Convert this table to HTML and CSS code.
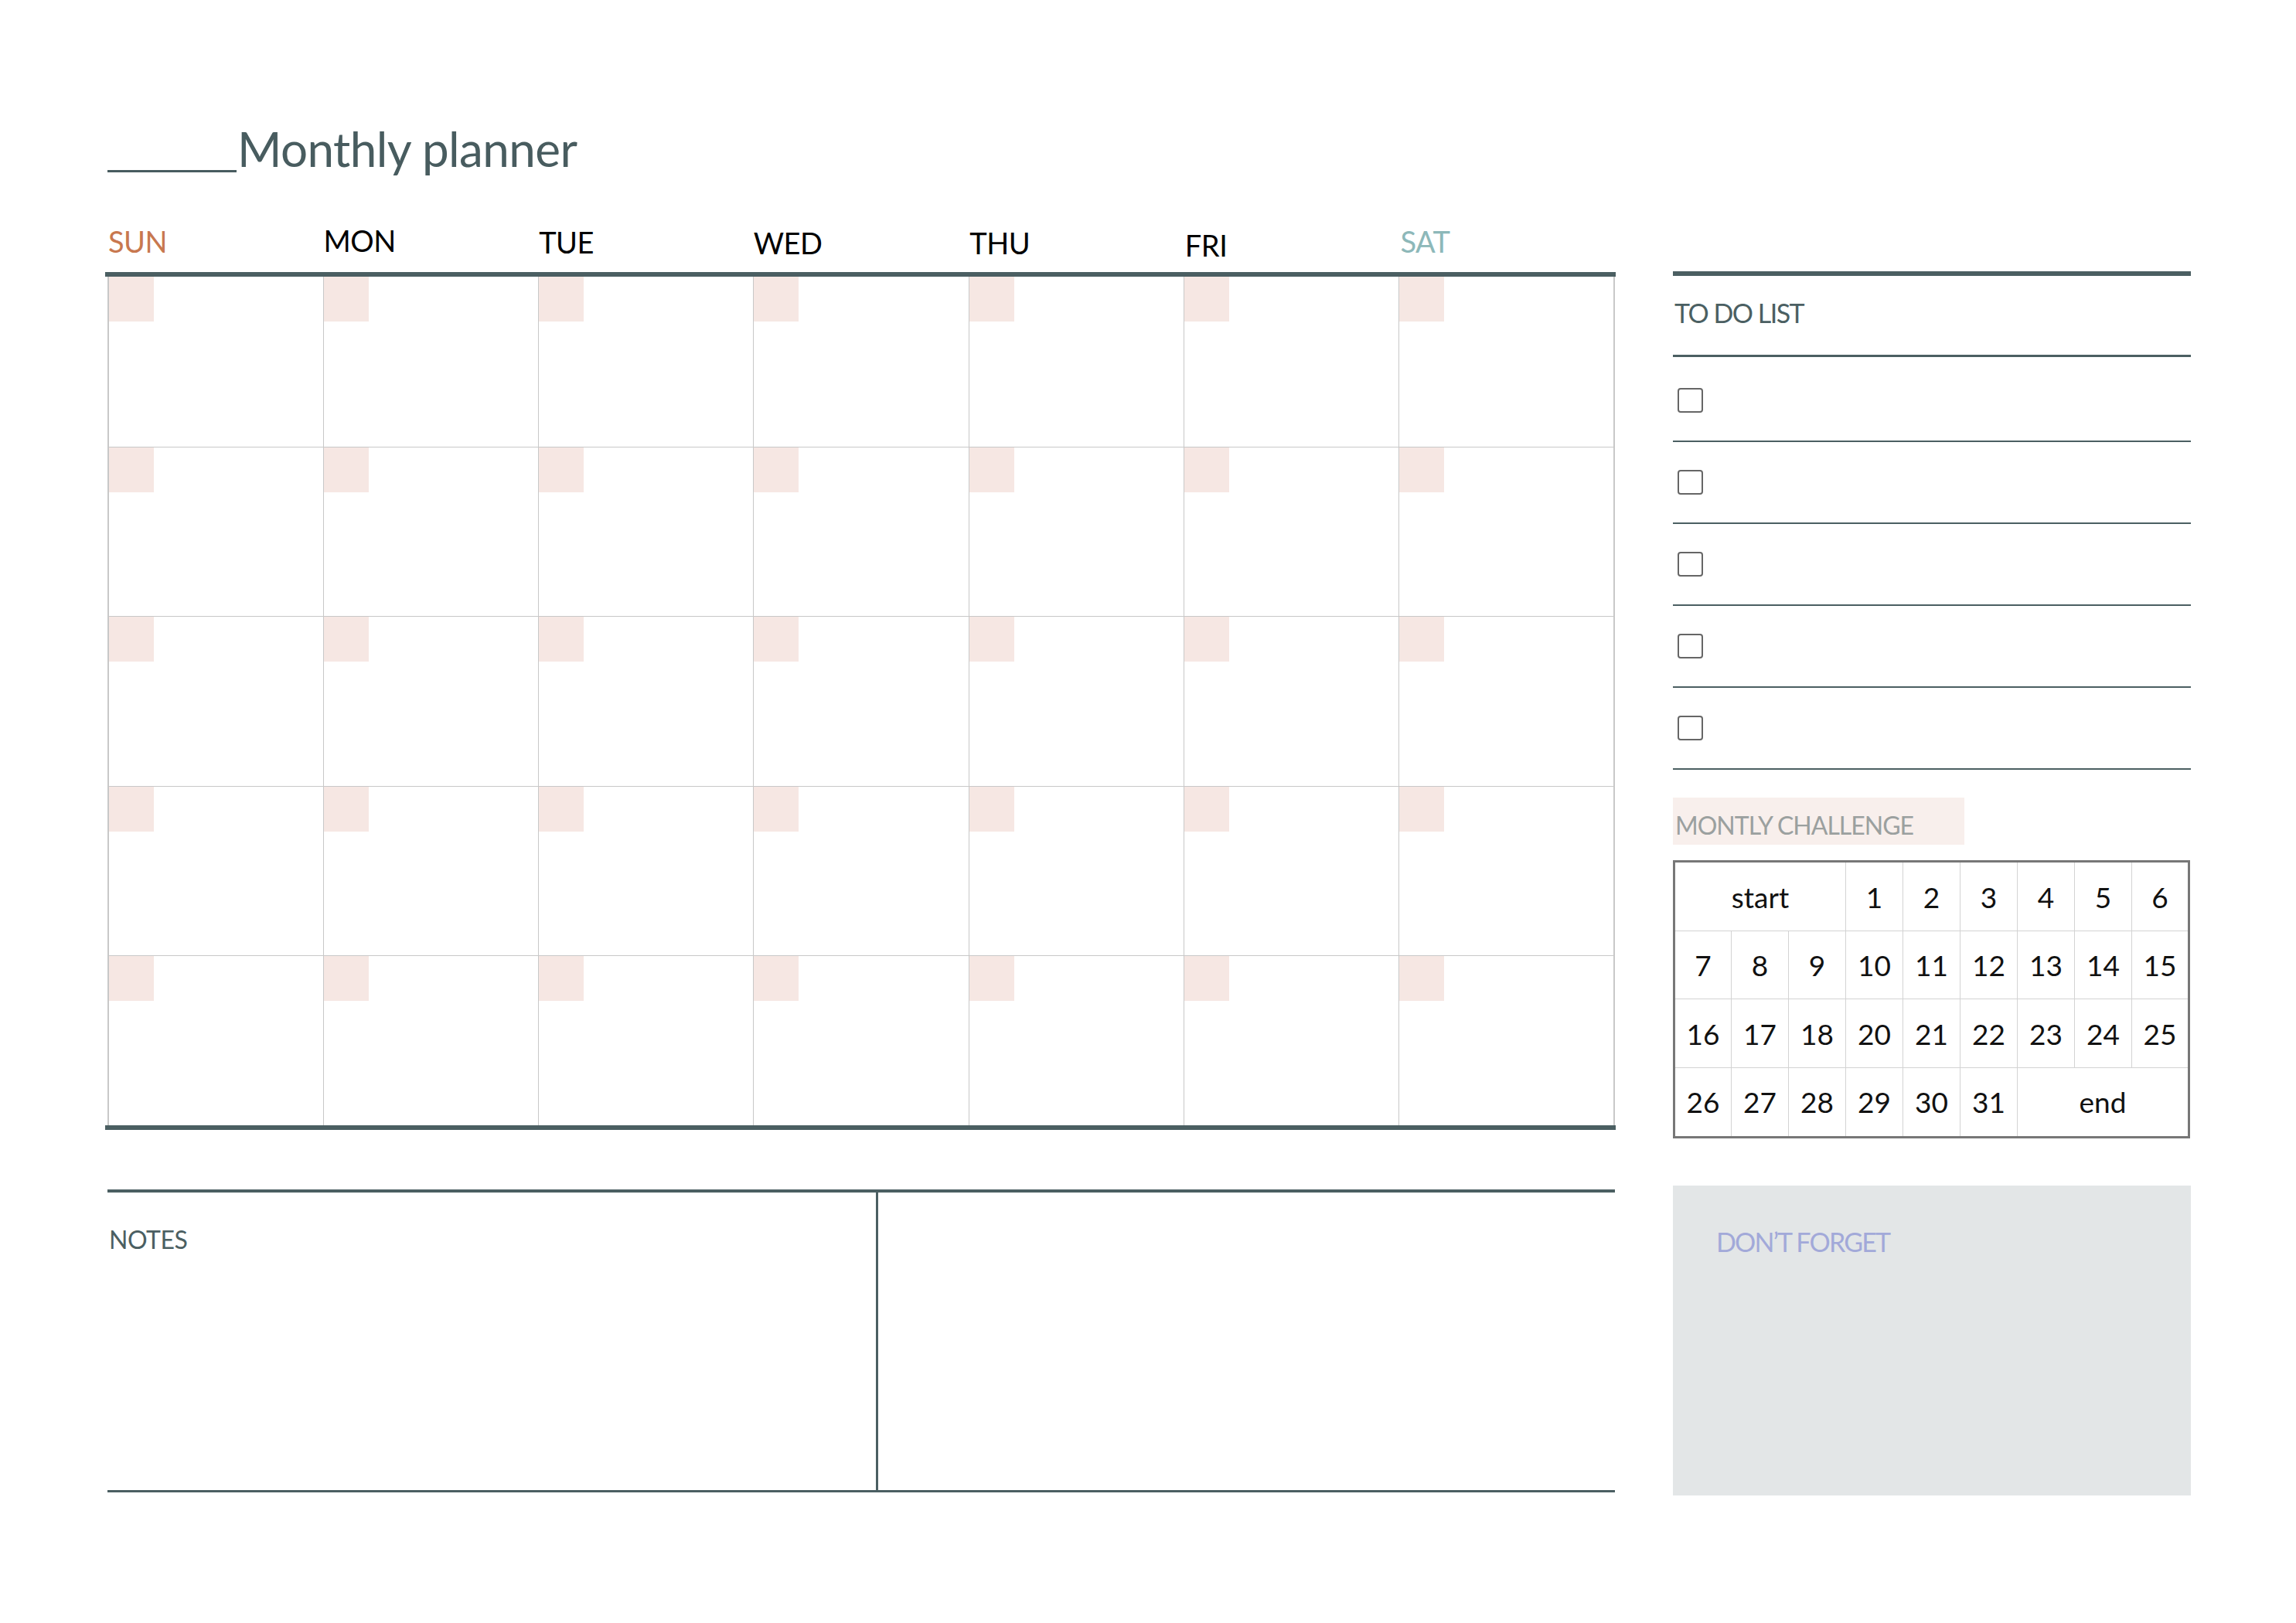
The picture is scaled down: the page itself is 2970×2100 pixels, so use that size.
FILE: index.html
```html
<!DOCTYPE html>
<html lang="en">
<head>
<meta charset="utf-8">
<title>Monthly planner</title>
<link rel="stylesheet" href="styles.css">
</head>
<body>
<div class="page">
  <h1 class="title"><span class="blank"></span>Monthly planner</h1>
  <div class="main">
    <div class="left">
      <div class="calendar">
        <div class="days">
          <div class="day sun">SUN</div>
          <div class="day mon">MON</div>
          <div class="day tue">TUE</div>
          <div class="day wed">WED</div>
          <div class="day thu">THU</div>
          <div class="day fri">FRI</div>
          <div class="day sat">SAT</div>
        </div>
        <div class="cal">
          <div class="cell"><span class="date"></span></div><div class="cell"><span class="date"></span></div><div class="cell"><span class="date"></span></div><div class="cell"><span class="date"></span></div><div class="cell"><span class="date"></span></div><div class="cell"><span class="date"></span></div><div class="cell"><span class="date"></span></div>
          <div class="cell"><span class="date"></span></div><div class="cell"><span class="date"></span></div><div class="cell"><span class="date"></span></div><div class="cell"><span class="date"></span></div><div class="cell"><span class="date"></span></div><div class="cell"><span class="date"></span></div><div class="cell"><span class="date"></span></div>
          <div class="cell"><span class="date"></span></div><div class="cell"><span class="date"></span></div><div class="cell"><span class="date"></span></div><div class="cell"><span class="date"></span></div><div class="cell"><span class="date"></span></div><div class="cell"><span class="date"></span></div><div class="cell"><span class="date"></span></div>
          <div class="cell"><span class="date"></span></div><div class="cell"><span class="date"></span></div><div class="cell"><span class="date"></span></div><div class="cell"><span class="date"></span></div><div class="cell"><span class="date"></span></div><div class="cell"><span class="date"></span></div><div class="cell"><span class="date"></span></div>
          <div class="cell"><span class="date"></span></div><div class="cell"><span class="date"></span></div><div class="cell"><span class="date"></span></div><div class="cell"><span class="date"></span></div><div class="cell"><span class="date"></span></div><div class="cell"><span class="date"></span></div><div class="cell"><span class="date"></span></div>
        </div>
      </div>
      <div class="notes">
        <div class="notes-l"><span class="notes-label">NOTES</span></div>
        <div class="notes-r"></div>
      </div>
    </div>
    <div class="right">
      <div class="todo-h">TO DO LIST</div>
      <ul class="todo-list">
        <li><span class="box"></span></li>
        <li><span class="box"></span></li>
        <li><span class="box"></span></li>
        <li><span class="box"></span></li>
        <li><span class="box"></span></li>
      </ul>
      <div class="challenge-label">MONTLY CHALLENGE</div>
      <table class="challenge">
        <tr><td colspan="3">start</td><td>1</td><td>2</td><td>3</td><td>4</td><td>5</td><td>6</td></tr>
        <tr><td>7</td><td>8</td><td>9</td><td>10</td><td>11</td><td>12</td><td>13</td><td>14</td><td>15</td></tr>
        <tr><td>16</td><td>17</td><td>18</td><td>20</td><td>21</td><td>22</td><td>23</td><td>24</td><td>25</td></tr>
        <tr><td>26</td><td>27</td><td>28</td><td>29</td><td>30</td><td>31</td><td colspan="3">end</td></tr>
      </table>
      <div class="dont">DON’T FORGET</div>
    </div>
  </div>
</div>
</body>
</html>
```

FILE: styles.css
```css
html, body {
  margin: 0;
  padding: 0;
  background: #ffffff;
}

body {
  font-family: "Lato", "Noto Sans", sans-serif;
  color: #4b5f62;
}

.page {
  width: 2970px;
  height: 2100px;
  box-sizing: border-box;
  padding: 161px 0 0 136px;
}

.title {
  margin: 0;
  height: 62px;
  display: flex;
  align-items: flex-end;
  font-size: 62px;
  line-height: 62px;
  font-weight: 400;
  letter-spacing: -0.6px;
  color: #485c5f;
}

.blank {
  display: block;
  width: 167px;
  height: 0;
  border-bottom: 3px solid #485c5f;
  margin: 0 1px 0 3px;
}

.main {
  display: flex;
  gap: 74px;
  margin-top: 70px;
}

.left {
  width: 1954px;
}

.calendar {
  border-bottom: 6px solid #4b5f62;
}

.days {
  display: grid;
  grid-template-columns: repeat(7, 1fr);
  height: 59px;
  padding: 0 1px 0 3px;
  border-bottom: 6px solid #4b5f62;
}

.day {
  font-size: 38px;
  line-height: 38px;
  padding-left: 1px;
  letter-spacing: -0.5px;
  color: #000000;
}

.day.sun { color: #c8784f; }
.day.sat { color: #8db8b9; }
.day.mon { margin-top: -1px; }
.day.tue { margin-top: 1px; }
.day.wed { margin-top: 2px; padding-left: 0; }
.day.thu { margin-top: 2px; }
.day.fri { margin-top: 5px; }

.cal {
  display: grid;
  grid-template-columns: repeat(7, 1fr);
  grid-template-rows: repeat(5, 1fr);
  height: 1098px;
  margin: 0 1px 0 3px;
  border-left: 1px solid #c8c8c8;
  border-right: 2px solid #c8c8c8;
}

.cell {
  border-left: 1px solid #c8c8c8;
  border-top: 1px solid #c8c8c8;
}

.cell:nth-child(-n+7) {
  border-top: 0;
}

.date {
  display: block;
  width: 58px;
  height: 58px;
  background: #f6e7e3;
}

.notes {
  display: flex;
  height: 385px;
  margin: 77px 1px 0 3px;
  border-top: 4px solid #4b5f62;
  border-bottom: 3px solid #4b5f62;
}

.notes-l {
  width: 997px;
  border-right: 3px solid #4b5f62;
  padding: 45px 0 0 2px;
  box-sizing: border-box;
}

.notes-label {
  display: block;
  font-size: 32px;
  line-height: 32px;
  letter-spacing: -0.5px;
  color: #4b5f62;
}

.notes-r {
  flex: 1;
}

.right {
  width: 670px;
  padding-top: 58px;
}

.todo-h {
  border-top: 6px solid #4b5f62;
  border-bottom: 3px solid #4b5f62;
  padding: 31px 0 37px 2px;
  font-size: 34px;
  line-height: 34px;
  letter-spacing: -1.5px;
  color: #4b5f62;
}

.todo-list {
  list-style: none;
  margin: 0;
  padding: 4px 0 0 0;
}

.todo-list li {
  height: 104px;
  border-bottom: 2px solid #4b5f62;
  display: flex;
  align-items: center;
  padding-left: 6px;
}

.box {
  display: block;
  width: 29px;
  height: 28px;
  border: 2px solid #666666;
  border-radius: 4px;
}

.challenge-label {
  margin-top: 36px;
  width: 377px;
  height: 61px;
  box-sizing: border-box;
  padding: 20px 0 0 3px;
  background: #f8efec;
  font-size: 32px;
  line-height: 32px;
  letter-spacing: -1px;
  color: #9ba09f;
}

.challenge {
  margin-top: 20px;
  width: 669px;
  height: 360px;
  border-collapse: collapse;
  table-layout: fixed;
  border: 3px solid #777777;
}

.challenge td {
  border: 1px solid #d3d3d3;
  text-align: center;
  vertical-align: middle;
  padding: 0;
  font-size: 37px;
  color: #111111;
}

.dont {
  margin-top: 61px;
  width: 670px;
  height: 401px;
  box-sizing: border-box;
  padding: 56px 0 0 56px;
  background: #e3e6e7;
  font-size: 34px;
  line-height: 34px;
  letter-spacing: -1.8px;
  color: #a2a9d9;
}
```
